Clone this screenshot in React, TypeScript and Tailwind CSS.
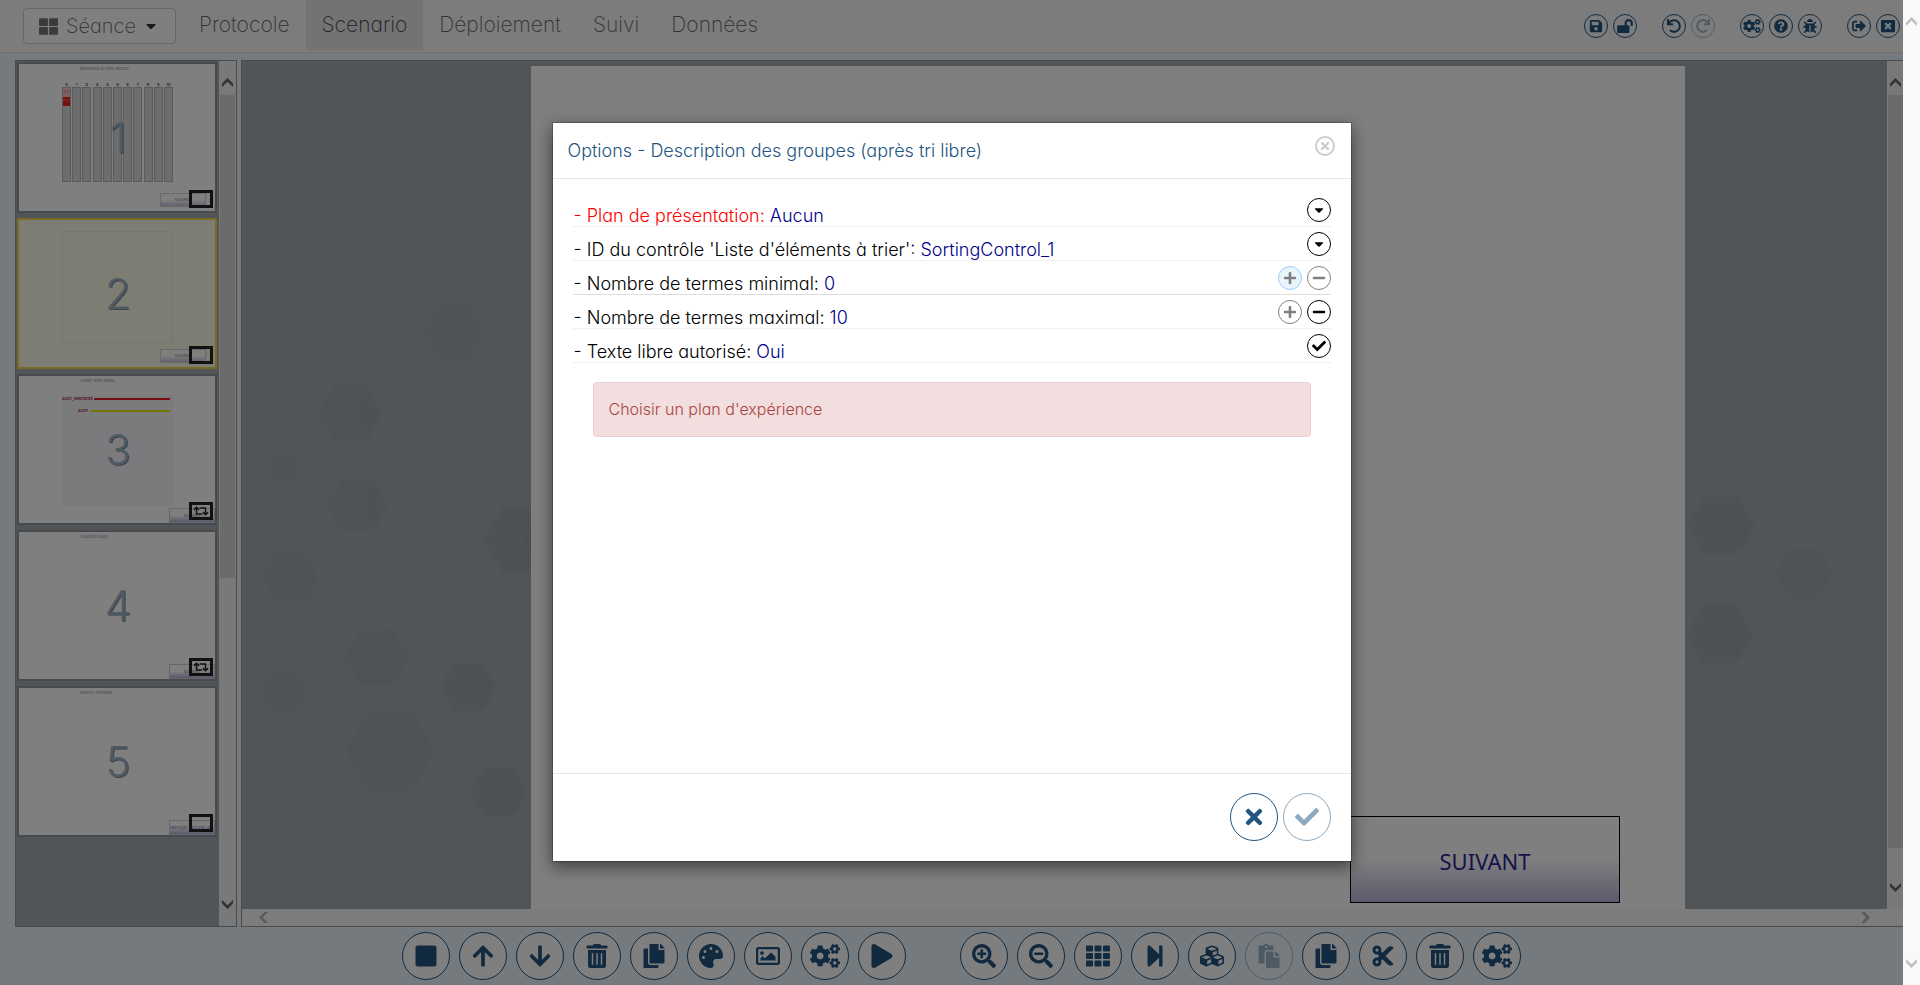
import React from "react";
import {
  FaArrowDown,
  FaArrowUp,
  FaBug,
  FaCaretDown,
  FaCheck,
  FaCogs,
  FaCopy,
  FaCubes,
  FaCut,
  FaLockOpen,
  FaMinus,
  FaPalette,
  FaPaste,
  FaPlay,
  FaPlus,
  FaQuestionCircle,
  FaRedo,
  FaRegImage,
  FaRetweet,
  FaSave,
  FaSearchMinus,
  FaSearchPlus,
  FaSignOutAlt,
  FaStepForward,
  FaStop,
  FaTh,
  FaThLarge,
  FaTimes,
  FaTrashAlt,
  FaUndo,
  FaWindowClose,
} from "react-icons/fa";
import type { IconType } from "react-icons";

type Action = { label: string; icon: IconType; disabled?: boolean };

const headerGroups: Action[][] = [
  [
    { label: "Enregistrer", icon: FaSave },
    { label: "Déverrouiller", icon: FaLockOpen },
  ],
  [
    { label: "Annuler", icon: FaUndo },
    { label: "Rétablir", icon: FaRedo, disabled: true },
  ],
  [
    { label: "Paramètres", icon: FaCogs },
    { label: "Aide", icon: FaQuestionCircle },
    { label: "Signaler un bug", icon: FaBug },
  ],
  [
    { label: "Quitter", icon: FaSignOutAlt },
    { label: "Fermer", icon: FaWindowClose },
  ],
];

const toolGroups: Action[][] = [
  [
    { label: "Nouvel écran", icon: FaStop },
    { label: "Monter", icon: FaArrowUp },
    { label: "Descendre", icon: FaArrowDown },
    { label: "Supprimer l'écran", icon: FaTrashAlt },
    { label: "Dupliquer l'écran", icon: FaCopy },
    { label: "Couleurs", icon: FaPalette },
    { label: "Image de fond", icon: FaRegImage },
    { label: "Options de l'écran", icon: FaCogs },
    { label: "Lire", icon: FaPlay },
  ],
  [
    { label: "Zoom avant", icon: FaSearchPlus },
    { label: "Zoom arrière", icon: FaSearchMinus },
    { label: "Grille", icon: FaTh },
    { label: "Suivant", icon: FaStepForward },
    { label: "Contrôles", icon: FaCubes },
    { label: "Coller", icon: FaPaste, disabled: true },
    { label: "Copier", icon: FaCopy },
    { label: "Couper", icon: FaCut },
    { label: "Supprimer", icon: FaTrashAlt },
    { label: "Options", icon: FaCogs },
  ],
];

const tabs = ["Protocole", "Scenario", "Déploiement", "Suivi", "Données"];

function Chevron({ className = "" }: { className?: string }) {
  return (
    <svg viewBox="0 0 11 9" className={`h-[9px] w-[11px] shrink-0 fill-current ${className}`} aria-hidden="true">
      <path d="M0 5.5 5.5 0 11 5.5V9L5.5 3.8 0 9z" />
    </svg>
  );
}

function HeaderAction({ label, icon: Icon, disabled }: Action) {
  return (
    <button
      aria-label={label}
      disabled={disabled}
      className="flex size-6 items-center justify-center rounded-full border border-[#22557f] text-[#22557f] disabled:opacity-40"
    >
      <Icon className="h-3.5 w-[18px] shrink-0" />
    </button>
  );
}

function ToolAction({ label, icon: Icon, disabled }: Action) {
  return (
    <button
      aria-label={label}
      disabled={disabled}
      className="flex size-12 items-center justify-center rounded-full border border-[#22557f] bg-white text-[#22557f] disabled:opacity-40"
    >
      <Icon className="h-6 w-[30px] shrink-0" />
    </button>
  );
}

function Header() {
  return (
    <header className="flex h-[53px] shrink-0 items-start justify-between border-b border-[#e7e0dc] bg-[#f8f8f8] pr-[3px] pl-[23px]">
      <div className="flex items-start">
        <button className="mt-2 flex h-9 w-[153px] items-center rounded border border-[#cccccc] bg-white pl-[15px] text-[20px] font-extralight text-[#666666]">
          <FaThLarge className="size-[19px] text-[#777777]" />
          <span className="ml-2">Séance</span>
          <FaCaretDown className="ml-[7px] size-4 text-[#333333]" />
        </button>
        <nav className="ml-[7px] flex font-extralight">
          {tabs.map((tab) => (
            <a
              key={tab}
              href={`#${tab}`}
              className={
                tab === "Scenario"
                  ? "flex h-[50px] items-center bg-[#e7e7e7] px-4 text-[21px] text-[#444444]"
                  : "flex h-[50px] items-center px-4 text-[21px] text-[#666666]"
              }
            >
              {tab}
            </a>
          ))}
        </nav>
      </div>
      <div className="mt-3.5 flex gap-[25px]">
        {headerGroups.map((group, i) => (
          <div key={i} className="flex gap-[5px]">
            {group.map((a) => (
              <HeaderAction key={a.label} {...a} />
            ))}
          </div>
        ))}
      </div>
    </header>
  );
}

type ThumbProps = {
  index: number;
  selected?: boolean;
  title?: string;
  next: string;
  wide?: boolean;
  loop?: boolean;
  children?: React.ReactNode;
};

function Thumb({ index, selected, title, next, wide, loop, children }: ThumbProps) {
  return (
    <li
      className={
        selected
          ? "relative h-[151px] overflow-hidden border-2 border-[#f0d848] bg-[#fbfae8]"
          : "relative h-[151px] overflow-hidden border-2 border-[#8f979c] bg-white"
      }
    >
      <p className="pt-[2px] pl-[61px] text-[4px] leading-[6px] font-normal text-[#8888a0]">{title}</p>
      {children}
      <span
        className={
          wide
            ? "absolute right-0 bottom-0 flex h-[15px] w-[46px] items-center justify-center border border-[#cccce0] bg-linear-to-b from-white from-50% to-[#b6b2d6] text-[4px] whitespace-nowrap text-[#444488]"
            : "absolute right-[9px] bottom-1 flex h-3.5 w-[46px] items-center justify-center border border-[#d0d0dc] bg-linear-to-b from-white/60 from-50% to-[#b6b2d6]/80 text-[4px] text-[#444488]"
        }
      >
        {next}
      </span>
      <span className="absolute right-0.5 bottom-[3px] flex h-[18px] w-6 items-center justify-center border-[3px] border-[#222222] text-[#222222]">
        {loop && <FaRetweet className="h-3 w-4 shrink-0" />}
      </span>
      <span className="absolute inset-x-0 top-[44px] pl-0.5 text-center text-[42px] leading-[60px] text-[#9db6cb] [text-shadow:1px_1px_0_#808890]">
        {index}
      </span>
    </li>
  );
}

function Thumbnails() {
  return (
    <ol className="flex w-[200px] flex-col gap-[5px]">
      <Thumb index={1} title="Bienvenue à cette séance" next="SUIVANT">
        <div className="mt-[11px] mr-[42px] ml-[43px] flex justify-between">
          {[0, 1, 2, 3, 4, 5, 6, 7, 8, 9, 10].map((n) => (
            <div key={n} className="flex w-[9px] flex-col">
              <span className="text-center text-[4px] leading-[4px] font-bold text-[#555566]">{n}</span>
              <div className="h-[95px] border border-[#b4b4b4] bg-[#dadada] text-[4px] leading-[8px]">
                {n === 0 && (
                  <>
                    <p className="h-[9px] bg-[#ffc4cc] text-center text-[#aa7780]">627</p>
                    <p className="h-[9px] bg-[#ee2222] text-center text-[#ff9090]">P01</p>
                  </>
                )}
              </div>
            </div>
          ))}
        </div>
      </Thumb>
      <Thumb index={2} selected next="SUIVANT">
        <div className="mt-[9px] ml-[43px] h-[112px] w-[111px] border border-[#eeedde]" />
      </Thumb>
      <Thumb index={3} title="[Saisir votre texte]" next="SUIVANT" wide loop>
        <div className="mt-[11px] ml-[43px] h-[111px] w-[111px] bg-[#f6f6fd] pt-0.5 pr-[3px] text-[4px] leading-[4px] text-[#aa2244]">
          <div className="flex items-center justify-end gap-px">
            <span className="font-semibold">A001_Moutarde</span>
            <span className="h-0.5 w-[79px] bg-[#ee1c24]" />
          </div>
          <div className="mt-2 flex items-center justify-end gap-[3px]">
            <span className="font-semibold">A001</span>
            <span className="h-0.5 w-[79px] bg-[#e8e800]" />
          </div>
        </div>
      </Thumb>
      <Thumb index={4} title="[SpecialLabel]" next="SUIVANT" wide loop />
      <Thumb index={5} title="Séance terminée" next="Renvoyer vers une URL" wide />
    </ol>
  );
}

function Cube({ x, y, r, o }: { x: number; y: number; r: number; o: number }) {
  return (
    <g transform={`translate(${x} ${y}) scale(${r})`} fill="#8a989d" opacity={o}>
      <path d="M-1 0-.5-.87H.5L1 0 .5.87H-.5z" opacity=".35" />
      <path d="M.05 0 .5-.87 1 0 .6.8z" opacity=".5" />
    </g>
  );
}

function Backdrop() {
  return (
    <svg className="absolute inset-0 h-full w-full" aria-hidden="true">
      <Cube x={108} y={352} r={32} o={0.4} />
      <Cube x={42} y={407} r={20} o={0.15} />
      <Cube x={115} y={444} r={30} o={0.45} />
      <Cube x={48} y={516} r={28} o={0.3} />
      <Cube x={280} y={479} r={38} o={0.75} />
      <Cube x={213} y={270} r={34} o={0.12} />
      <Cube x={134} y={596} r={32} o={0.3} />
      <Cube x={226} y={626} r={28} o={0.6} />
      <Cube x={148} y={690} r={44} o={0.3} />
      <Cube x={256} y={731} r={28} o={0.6} />
      <Cube x={42} y={631} r={26} o={0.15} />
      <Cube x={1479} y={464} r={33} o={0.6} />
      <Cube x={1562} y={512} r={28} o={0.3} />
      <Cube x={1477} y={573} r={33} o={0.6} />
    </svg>
  );
}

function Workspace() {
  return (
    <main className="flex min-h-0 flex-1 gap-1 pt-[7px] pl-[15px]">
      <section aria-label="Écrans" className="flex w-[222px] justify-between border border-[#91979b] bg-[#a2aab0]">
        <div className="pt-px pl-px">
          <Thumbnails />
        </div>
        <div className="flex w-[17px] flex-col items-center bg-[#f3f3f3] text-[#666666]">
          <Chevron className="mt-[17px] mb-2" />
          <div className="h-[483px] w-[15px] bg-[#d6d6d6]" />
          <Chevron className="mt-auto mb-[17px] rotate-180" />
        </div>
      </section>
      <section aria-label="Éditeur" className="flex min-w-0 flex-1 flex-col border-y border-l border-[#91979b] bg-[#a2aab0]">
        <div className="flex min-h-0 flex-1">
          <div className="relative flex flex-1 pt-[5px]">
            <Backdrop />
            <div className="relative mr-[202px] ml-[289px] flex-1 bg-white">
              <button className="absolute right-[65px] bottom-[6px] flex h-[87px] w-[270px] items-center justify-center border border-black bg-linear-to-b from-white from-50% to-[#b8b4d8] pt-1 font-['Noto_Sans',sans-serif] text-[22px] font-normal text-[#2c2496]">
                SUIVANT
              </button>
            </div>
          </div>
          <div className="flex w-4 flex-col items-center bg-[#f0f0f0] text-[#666666]">
            <Chevron className="mt-[17px] mb-2" />
            <div className="mb-[35px] w-[15px] flex-1 self-end bg-[#d6d6d6]" />
            <Chevron className="mb-[17px] rotate-180" />
          </div>
        </div>
        <div className="flex h-[17px] items-center justify-between bg-[#f8f8f8] pr-8 pl-4 text-[#b4b4b4]">
          <Chevron className="-rotate-90" />
          <Chevron className="rotate-90" />
        </div>
      </section>
    </main>
  );
}

function RoundButton({ label, icon: Icon, tone }: { label: string; icon: IconType; tone: "on" | "off" | "hover" }) {
  const tones = {
    on: "flex size-6 items-center justify-center rounded-full border border-black text-black",
    off: "flex size-6 items-center justify-center rounded-full border border-[#808080] text-[#808080]",
    hover: "flex size-6 items-center justify-center rounded-full border border-[#99ccff] bg-[#e8f6fc] text-[#808080]",
  };
  return (
    <button aria-label={label} className={tones[tone]}>
      <Icon className="size-3.5" />
    </button>
  );
}

type RowProps = { label: string; value: string; required?: boolean; active?: boolean; children: React.ReactNode };

function OptionRow({ label, value, required, active, children }: RowProps) {
  return (
    <li
      className={
        active
          ? "flex h-[34px] items-start justify-between border-b border-[#dddddd]"
          : "flex h-[34px] items-start justify-between border-b border-[#f0f0f0]"
      }
    >
      <p className="pt-3 pl-px text-[18px] leading-[22px] text-[#00008b]">
        <span className={required ? "text-[#ff0000]" : "text-black"}>- {label}:</span> {value}
      </p>
      <div className="flex gap-[5px] pt-[5px]">{children}</div>
    </li>
  );
}

function OptionsDialog() {
  return (
    <div
      role="dialog"
      aria-labelledby="dialog-title"
      className="flex h-[740px] w-[800px] flex-col border border-black/20 bg-white bg-clip-padding shadow-[0_5px_15px_rgba(0,0,0,0.5)]"
    >
      <div className="flex h-14 shrink-0 items-start justify-between border-b border-[#e5e5e5] pr-4 pl-[15px]">
        <h2 id="dialog-title" className="pt-3.5 text-[18px] leading-[27px] text-[#22557f]">
          Options - Description des groupes (après tri libre)
        </h2>
        <button
          aria-label="Fermer la fenêtre"
          className="mt-[13px] flex size-5 items-center justify-center rounded-full border-2 border-[#cccccc] text-[#cccccc]"
        >
          <FaTimes className="size-3" />
        </button>
      </div>
      <div className="flex-1 px-5 pt-3.5">
        <ul>
          <OptionRow label="Plan de présentation" value="Aucun" required>
            <RoundButton label="Choisir le plan" icon={FaCaretDown} tone="on" />
          </OptionRow>
          <OptionRow label="ID du contrôle 'Liste d'éléments à trier'" value="SortingControl_1">
            <RoundButton label="Choisir le contrôle" icon={FaCaretDown} tone="on" />
          </OptionRow>
          <OptionRow label="Nombre de termes minimal" value="0" active>
            <RoundButton label="Augmenter le minimum" icon={FaPlus} tone="hover" />
            <RoundButton label="Diminuer le minimum" icon={FaMinus} tone="off" />
          </OptionRow>
          <OptionRow label="Nombre de termes maximal" value="10">
            <RoundButton label="Augmenter le maximum" icon={FaPlus} tone="off" />
            <RoundButton label="Diminuer le maximum" icon={FaMinus} tone="on" />
          </OptionRow>
          <OptionRow label="Texte libre autorisé" value="Oui">
            <RoundButton label="Autoriser le texte libre" icon={FaCheck} tone="on" />
          </OptionRow>
        </ul>
        <p
          role="alert"
          className="mx-5 mt-[19px] rounded border border-[#ebccd1] bg-[#f2dede] p-[15px] text-[16px] leading-[23px] text-[#a94442]"
        >
          Choisir un plan d'expérience
        </p>
      </div>
      <div className="flex h-[88px] shrink-0 justify-end gap-[5px] border-t border-[#e5e5e5] pt-[19px] pr-5">
        <button
          aria-label="Annuler"
          className="flex size-12 items-center justify-center rounded-full border border-[#22557f] text-[#22557f]"
        >
          <FaTimes className="size-6" />
        </button>
        <button
          aria-label="Valider"
          disabled
          className="flex size-12 items-center justify-center rounded-full border border-[#22557f] text-[#22557f] opacity-50"
        >
          <FaCheck className="size-6" />
        </button>
      </div>
    </div>
  );
}

export default function App() {
  return (
    <div className="flex h-screen font-['Inter',sans-serif] font-light [font-feature-settings:'cv11']">
      <div className="relative flex min-w-0 flex-1 flex-col bg-[#ebf5fc]">
        <Header />
        <Workspace />
        <footer className="flex h-[58px] shrink-0 items-center justify-center gap-[54px] pl-5">
          {toolGroups.map((group, i) => (
            <div key={i} className="flex gap-[9px]">
              {group.map((a) => (
                <ToolAction key={a.label} {...a} />
              ))}
            </div>
          ))}
        </footer>
        <div className="absolute inset-0 flex items-start justify-center bg-black/50 pt-[122px]">
          <OptionsDialog />
        </div>
      </div>
      <div className="flex w-[17px] shrink-0 flex-col items-center justify-between bg-[#f9f9f9] py-[17px] text-[#c0c0c0]">
        <Chevron />
        <Chevron className="rotate-180" />
      </div>
    </div>
  );
}
